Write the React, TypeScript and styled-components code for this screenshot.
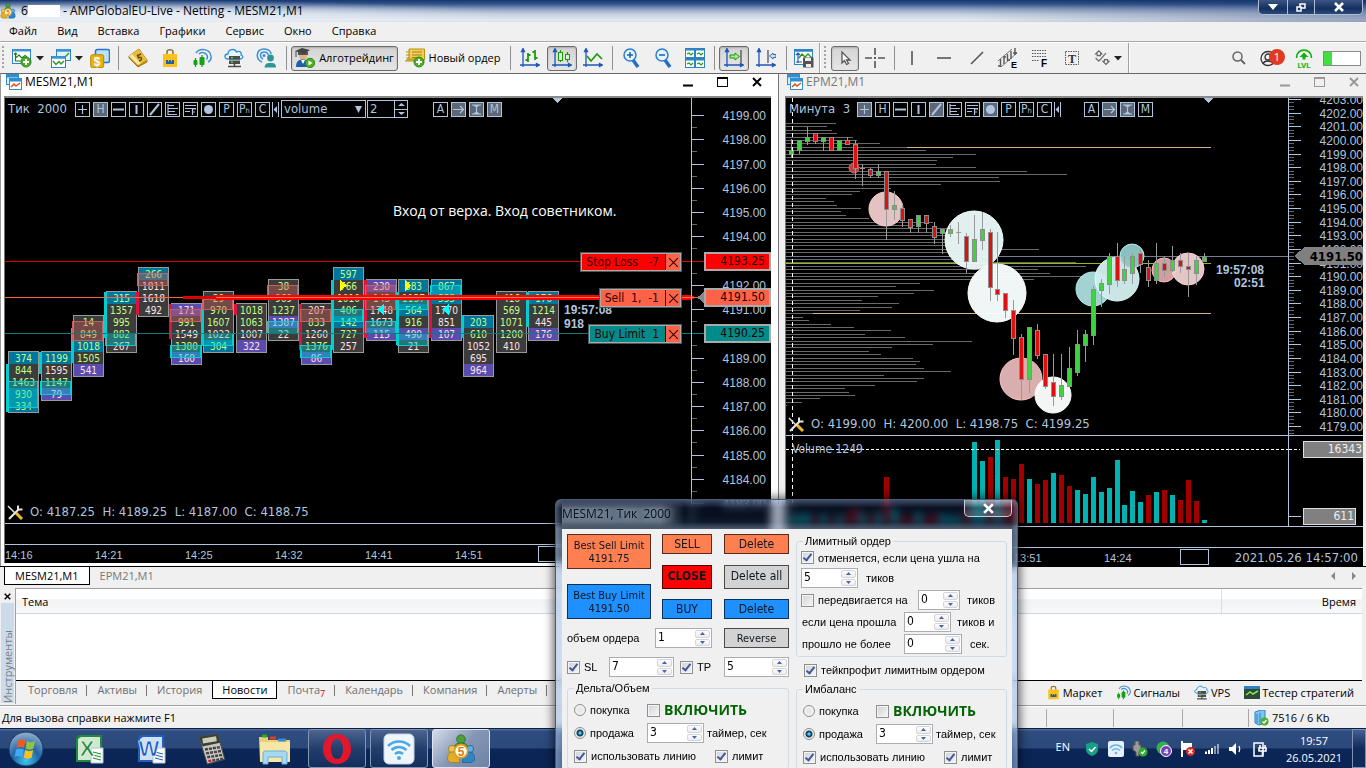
import React from 'react';
import styled, { createGlobalStyle, css } from 'styled-components';

const UI = '"Open Sans", "Noto Sans", sans-serif';
const TAHOMA = '"DejaVu Sans Condensed", "DejaVu Sans", sans-serif';
const SANS = '"Liberation Sans", Arial, sans-serif';
const STEEL = '#b0c4de';

const GlobalStyle = createGlobalStyle`
  *, *::before, *::after { box-sizing: border-box; }
  body { margin: 0; overflow: hidden; background: #f0f0f0; }
  button, input, select { font: inherit; color: inherit; margin: 0; padding: 0; }
  button { border: 0; background: none; }
  a { color: inherit; text-decoration: none; }
`;

const Desktop = styled.div`
  position: relative;
  display: flex;
  flex-direction: column;
  height: 100vh;
  min-height: 700px;
  overflow: hidden;
  font-family: ${UI};
  font-size: 11px;
  line-height: 16px;
  color: #000;
  background: #f0f0f0;
`;

/* ---------- title bar and menu ---------- */

const TitleBar = styled.header`
  flex: none;
  display: flex;
  align-items: flex-start;
  height: 22px;
  background:
    radial-gradient(ellipse 380px 14px at 130px 14px, rgba(240, 245, 252, 0.9), rgba(240, 245, 252, 0)),
    linear-gradient(to right, rgba(10, 40, 100, 0) 70%, rgba(10, 40, 100, 0.35)),
    linear-gradient(#17386f 0, #34558b 4px, #8c9fc0 9px, #c3cfdf 14px, #e4e9f0 20px, #d8dfe8);
`;

const AppTitle = styled.h1`
  flex: 1;
  display: flex;
  align-items: center;
  gap: 5px;
  height: 22px;
  margin: 0;
  font-size: 12px;
  font-weight: 400;
`;

const Redacted = styled.span`
  display: inline-block;
  width: 32px;
  height: 12px;
  margin: -2px 0 0;
  background: #fff;
  vertical-align: middle;
`;

const CaptionButtons = styled.div`
  display: flex;
  margin-right: 3px;
  border: 1px solid #aebbd0;
  border-top: 0;
  border-radius: 0 0 5px 5px;
  overflow: hidden;
`;

const CaptionButton = styled.button<{ $w: number }>`
  display: grid;
  place-items: center;
  width: ${(p) => p.$w}px;
  height: 14px;
  background: linear-gradient(#3c5582, #13305f 60%, #2b4a7b);
  & + & { border-left: 1px solid #aebbd0; }
`;

const MenuBar = styled.nav`
  flex: none;
  display: flex;
  gap: 20px;
  height: 20px;
  padding: 1px 9px 0;
  border-bottom: 1px solid #a8a8a8;
`;

/* ---------- toolbar ---------- */

const Toolbar = styled.div`
  flex: none;
  display: flex;
  align-items: center;
  height: 31px;
  border-top: 1px solid #fff;
  background: #f0f0f0;
`;

const ToolButton = styled.button<{ $w: number; $on?: boolean }>`
  flex: none;
  display: flex;
  align-items: center;
  justify-content: center;
  gap: 4px;
  width: ${(p) => p.$w}px;
  height: 25px;
  white-space: nowrap;
  ${(p) => p.$on && css`
    width: ${p.$w - 2}px;
    margin: 0 1px;
    border: 1px solid #6d6d6d;
    border-radius: 3px;
    background: linear-gradient(#d4d4d4, #e6e6e6);
    box-shadow: inset 0 1px 2px #aaa;
  `}
`;

const Separator = styled.i`
  flex: none;
  width: 1px;
  height: 24px;
  margin: 0 3px 0 4px;
  background: #8f8f8f;
`;

const Edge = styled.i`
  flex: none;
  width: 2px;
  height: 30px;
  margin: 0 1px;
  border-left: 1px solid #a0a0a0;
  background: #fff;
`;

const Grip = styled.i`
  flex: none;
  width: 2px;
  height: 24px;
  margin: 0 4px 0 2px;
  background: repeating-linear-gradient(#a5a5a5 0 2px, transparent 2px 4px);
`;

const ToolbarEnd = styled.div`
  display: flex;
  align-items: center;
  gap: 10px;
  margin-left: auto;
  padding-right: 5px;
`;

const SearchButton = styled.button`
  display: flex;
  margin-right: 4px;
`;

const AccountButton = styled.button`
  position: relative;
  display: flex;
  width: 25px;
`;

const Badge = styled.span`
  position: absolute;
  left: 9px;
  top: -1px;
  width: 16px;
  height: 16px;
  border-radius: 50%;
  background: #e03a20;
  color: #fff;
  line-height: 16px;
  text-align: center;
`;

const Connection = styled.div`
  width: 38px;
  height: 15px;
  border: 1px solid #8a8a8a;
  background: linear-gradient(to right, #3fe03f 8px, #fff 8px);
`;

/* ---------- chart windows ---------- */

const Workspace = styled.main`
  flex: 1;
  display: grid;
  grid-template-columns: minmax(0, 778fr) minmax(0, 588fr);
  min-height: 0;
  border-bottom: 1px solid #000;
`;

const ChartWindow = styled.section<{ $active?: boolean }>`
  display: flex;
  flex-direction: column;
  min-width: 0;
  min-height: 0;
  border-top: 1px solid #666;
  ${(p) => p.$active
    ? css`
      padding: 0 7px 3px 3px;
      border-left: 1px solid #999;
      background: #fff;
    `
    : css`
      padding: 0 3px 0 6px;
      border-left: 1px solid #777;
      background: #f0f0f0;
    `}
`;

const WindowTitle = styled.h2<{ $muted?: boolean }>`
  flex: none;
  display: flex;
  align-items: flex-start;
  gap: 2px;
  height: 22px;
  margin: 0;
  padding-left: 2px;
  font-size: 12px;
  font-weight: 400;
  color: ${(p) => (p.$muted ? '#777' : '#000')};
`;

const WindowControls = styled.span<{ $end: number }>`
  display: flex;
  gap: 24px;
  margin: 1px ${(p) => p.$end}px 0 auto;
`;

const ChartBox = styled.div<{ $rows: string; $axis: number }>`
  flex: 1;
  display: grid;
  grid-template: ${(p) => p.$rows} / minmax(0, 1fr) ${(p) => p.$axis}px;
  min-height: 0;
  border-top: 2px solid #8a8a8a;
  border-left: 1px solid #777;
  background: #000;
  color: ${STEEL};
  overflow: hidden;
`;

const Pane = styled.div`
  position: relative;
  min-width: 0;
  min-height: 0;
  overflow: hidden;
`;

const AxisPane = styled(Pane)`
  border-left: 1px solid ${STEEL};
`;

const VolumePane = styled(Pane)`
  border-top: 1px solid ${STEEL};
`;

const VolumeAxis = styled(AxisPane)`
  border-top: 1px solid ${STEEL};
`;

const PaneSvg = styled.svg`
  display: block;
  width: 100%;
  height: 100%;
  shape-rendering: crispEdges;
  font-family: ${TAHOMA};
`;

const Strip = styled.div`
  grid-column: 1 / -1;
  border-top: 1px solid ${STEEL};
`;

const TimeAxis = styled.div`
  position: relative;
  grid-column: 1 / -1;
  display: flex;
  border-top: 1px solid ${STEEL};
  font-family: ${SANS};
  font-size: 11px;
  line-height: 20px;
`;

const TimeOffset = styled.i`
  flex: none;
  width: 138px;
`;

const TimeMark = styled.span`
  flex: none;
  width: 90px;
`;

const TimeBox = styled.i<{ $left: number }>`
  position: absolute;
  left: ${(p) => p.$left}px;
  top: 1px;
  width: 29px;
  height: 16px;
  border: 1px solid ${STEEL};
  background: #000;
`;

const TimeNow = styled.time`
  margin-left: auto;
  padding-right: 5px;
  font-family: ${TAHOMA};
  font-size: 13px;
`;

const ChartTools = styled.div`
  position: absolute;
  left: 3px;
  top: 1px;
  display: flex;
  align-items: center;
  height: 20px;
  font-family: ${TAHOMA};
  font-size: 13px;
`;

const Period = styled.span<{ $w: number }>`
  width: ${(p) => p.$w}px;
  white-space: pre;
`;

const MiniButton = styled.button<{ $on?: boolean }>`
  display: grid;
  place-items: center;
  width: 15px;
  height: 15px;
  margin-right: 3px;
  border: 1px solid ${STEEL};
  background: ${(p) => (p.$on ? '#5c6878' : '#000')};
  font-size: 12px;
  line-height: 12px;
`;

const CollapseButton = styled.button`
  display: flex;
  width: 9px;
  margin-left: -1px;
`;

const DarkSelect = styled.span`
  display: flex;
  align-items: center;
  width: 85px;
  height: 18px;
  margin-right: 1px;
  padding: 0 3px 0 2px;
  border: 1px solid ${STEEL};
  select {
    flex: 1;
    min-width: 0;
    border: 0;
    outline: 0;
    appearance: none;
    background: #000;
  }
`;

const DarkNumber = styled.span`
  display: flex;
  width: 41px;
  height: 18px;
  border: 1px solid ${STEEL};
  input {
    width: 26px;
    padding-left: 2px;
    border: 0;
    outline: 0;
    background: #000;
  }
`;

const DarkArrows = styled.span`
  flex: 1;
  display: grid;
  border-left: 1px solid ${STEEL};
  button { display: grid; place-items: center; }
  button + button { border-top: 1px solid ${STEEL}; }
`;

const ModeTools = styled.div<{ $gap: number }>`
  display: flex;
  margin-left: ${(p) => p.$gap}px;
`;

const Ohlc = styled.div`
  position: absolute;
  left: 2px;
  bottom: 3px;
  display: flex;
  align-items: center;
  gap: 6px;
  font-family: ${TAHOMA};
  font-size: 13px;
  white-space: pre;
`;

const PaneLabel = styled.div`
  position: absolute;
  left: 6px;
  top: 5px;
  font-family: ${TAHOMA};
  font-size: 12px;
`;

const OrderTag = styled.div<{ $y: number; $color: string }>`
  position: absolute;
  right: 9px;
  top: ${(p) => p.$y - 10}px;
  display: flex;
  height: 20px;
  border: 2px solid #aaa;
  outline: 1px solid #555;
  outline-offset: -1px;
  background: ${(p) => p.$color};
  color: #300;
  font-family: ${TAHOMA};
  font-size: 12px;
  line-height: 16px;
  white-space: pre;
  span { padding: 0 6px 0 4px; }
  button {
    display: grid;
    place-items: center;
    width: 15px;
    border-left: 1px solid #200;
    background: #ff6347;
  }
`;

const PriceTag = styled.div<{ $y: number; $color: string }>`
  position: absolute;
  left: 12px;
  right: 0;
  top: ${(p) => p.$y - 9}px;
  height: 19px;
  padding-right: 4px;
  border: 2px solid #aaa;
  background: ${(p) => p.$color};
  color: #200;
  font-family: ${TAHOMA};
  font-size: 12px;
  line-height: 15px;
  text-align: right;
`;

const VolumeTag = styled.div<{ $y: number; $w: number }>`
  position: absolute;
  left: 14px;
  top: ${(p) => p.$y}px;
  width: ${(p) => p.$w}px;
  height: 17px;
  padding-right: 1px;
  border: 1px solid #ddd;
  background: #808080;
  color: #eee;
  font-family: ${TAHOMA};
  font-size: 12px;
  line-height: 15px;
  text-align: right;
`;

/* ---------- chart tabs, toolbox, status bar ---------- */

const ChartTabs = styled.div`
  flex: none;
  display: flex;
  align-items: flex-start;
  height: 20px;
  padding-left: 4px;
`;

const ChartTab = styled.button<{ $on?: boolean }>`
  height: 18px;
  padding: 0 10px;
  color: #777;
  ${(p) => p.$on && css`
    border: 1px solid #000;
    border-top: 0;
    background: #fff;
    color: #000;
  `}
`;

const TabScroll = styled.span`
  display: flex;
  gap: 12px;
  margin: 5px 6px 0 auto;
`;

const Toolbox = styled.section`
  flex: none;
  display: flex;
  height: 119px;
  padding: 1px 4px 1px 0;
  border-bottom: 1px solid #a0a0a0;
`;

const ToolboxSide = styled.div`
  display: flex;
  flex-direction: column;
  align-items: center;
  width: 15px;
`;

const SideTitle = styled.h2`
  flex: 1;
  width: 13px;
  margin: 2px 0 1px;
  background: #cbdbea;
  color: #7a7f86;
  font-size: 11px;
  font-weight: 400;
  line-height: 13px;
  writing-mode: vertical-rl;
  transform: rotate(180deg);
`;

const CloseSmall = styled.button`
  height: 13px;
`;

const ToolboxBody = styled.div`
  flex: 1;
  display: flex;
  flex-direction: column;
  min-width: 0;
  border-left: 1px solid #a0a0a0;
  border-top: 1px solid #a0a0a0;
`;

const NewsArea = styled.div`
  flex: 1;
  background: #fff;
  border-bottom: 1px solid #000;
`;

const NewsTable = styled.table`
  width: 100%;
  border-collapse: collapse;
  table-layout: fixed;
  th {
    height: 24px;
    padding: 3px 6px 0;
    border-bottom: 1px solid #d5d5d5;
    background: linear-gradient(#fff 40%, #f1f2f4 45%, #f7f8fa);
    font-weight: 400;
    text-align: left;
  }
  th:last-child {
    width: 141px;
    border-left: 1px solid #dedfe1;
    text-align: right;
  }
`;

const ToolboxTabs = styled.div`
  flex: none;
  display: flex;
  align-items: flex-start;
  height: 23px;
  padding-left: 2px;
`;

const ToolboxTab = styled.button<{ $on?: boolean; $bare?: boolean }>`
  height: 18px;
  padding: 0 10px;
  color: #6f6f6f;
  background: ${(p) => (p.$bare ? 'none' : 'linear-gradient(#777, #777) right 4px / 1px 11px no-repeat')};
  ${(p) => p.$on && css`
    padding: 0 9px;
    border: 1px solid #000;
    border-top: 0;
    background: #fff;
    color: #000;
  `}
`;

const MailCount = styled.sub`
  color: #e00000;
  font-size: 9px;
  line-height: 9px;
`;

const ServiceLinks = styled.div`
  display: flex;
  gap: 14px;
  margin: 4px 8px 0 auto;
  a { display: flex; gap: 2px; }
`;

const StatusBar = styled.footer`
  flex: none;
  display: flex;
  align-items: center;
  height: 22px;
  padding: 1px 0 0 2px;
  border-top: 1px solid #fff;
`;

const StatusText = styled.span`
  flex: 1;
`;

const StatusCell = styled.span<{ $w: number }>`
  display: flex;
  align-items: center;
  gap: 3px;
  width: ${(p) => p.$w}px;
  height: 18px;
  padding-left: 4px;
  border-left: 1px solid #a8a8a8;
`;

/* ---------- task bar ---------- */

const TaskBar = styled.div`
  flex: none;
  display: flex;
  align-items: center;
  height: 40px;
  border-top: 1px solid #0d1f40;
  background: linear-gradient(#5b78a4 0, #2f4d80 2px, #2b487a 19px, #0b2657 20px, #0a2454);
  color: #fff;
`;

const PinGroup = styled.div`
  display: flex;
  margin-left: 4px;
`;

const TaskButton = styled.button<{ $state?: 'open' | 'active' }>`
  display: grid;
  place-items: center;
  width: 58px;
  height: 39px;
  margin: 0 2px;
  border-radius: 3px;
  ${(p) => p.$state && css`
    border: 1px solid ${p.$state === 'active' ? '#dfe6f0' : '#8295b5'};
    background: ${p.$state === 'active'
      ? 'linear-gradient(135deg, #d5dce8, #8597b6 50%, #6d82a6)'
      : 'linear-gradient(#4c648e, #233e6c 50%, #142e5e)'};
  `}
`;

const StartButton = styled.button`
  display: grid;
  place-items: center;
  width: 54px;
  padding-right: 2px;
`;

const Tray = styled.div`
  display: flex;
  align-items: center;
  gap: 8px;
  margin-left: auto;
`;

const Language = styled.span`
  margin: -4px 6px 0 0;
`;

const Clock = styled.time`
  width: 76px;
  line-height: 17px;
  text-align: center;
`;

const ShowDesktop = styled.button`
  width: 14px;
  height: 39px;
  margin-left: -8px;
  border: 1px solid #7f92b4;
  background: linear-gradient(#44608f, #102a5a 50%);
`;

/* ---------- trading dialog ---------- */

const Dialog = styled.aside`
  position: absolute;
  left: 555px;
  top: 499px;
  bottom: 0;
  width: 463px;
  padding: 0 5px 0 6px;
  overflow: hidden;
  border: 1px solid #4b5a72;
  border-bottom: 0;
  border-radius: 6px 6px 0 0;
  background:
    linear-gradient(to right, rgba(180, 200, 230, 0.35), rgba(10, 30, 70, 0) 8px, rgba(10, 30, 70, 0) 455px, rgba(180, 200, 230, 0.3)),
    linear-gradient(rgba(120, 150, 200, 0.5), rgba(20, 45, 95, 0.35) 8px, rgba(15, 40, 85, 0.35) 22px, rgba(120, 145, 180, 0.6) 29px, rgba(150, 185, 230, 0.45) 50px);
  backdrop-filter: blur(4px);
  box-shadow: 0 0 10px 2px rgba(0, 0, 0, 0.6);
  font-family: ${SANS};
  font-size: 11px;
`;

const DialogTitle = styled.h2`
  display: flex;
  justify-content: space-between;
  height: 29px;
  margin: 0;
  color: #0a0f1c;
  font-family: ${UI};
  font-size: 12px;
  font-weight: 400;
  line-height: 28px;
  white-space: pre;
  span {
    padding: 0 14px 0 0;
    background: linear-gradient(to right, rgba(170, 185, 208, 0.55) 80%, rgba(170, 185, 208, 0));
    mask-image: linear-gradient(transparent, #000 30%, #000 75%, transparent);
    text-shadow: 0 0 6px #b4c0d4;
  }
`;

const DialogClose = styled.button`
  display: grid;
  place-items: center;
  width: 48px;
  height: 17px;
  border: 1px solid #c7cfdb;
  border-top: 0;
  border-radius: 0 0 5px 5px;
  background: linear-gradient(rgba(255, 255, 255, 0.45), rgba(255, 255, 255, 0.1) 50%, rgba(255, 255, 255, 0.2));
`;

const DialogBody = styled.div`
  display: flex;
  gap: 7px;
  height: 300px;
  padding: 5px 5px 0;
  background: #f0f0f0;
`;

const OrderColumn = styled.div`
  flex: none;
  width: 222px;
`;

const LimitColumn = styled.div`
  flex: 1;
  min-width: 0;
`;

const OrderPad = styled.div`
  display: flex;
  gap: 12px;
  height: 85px;
  font-family: ${TAHOMA};
`;

const PadColumn = styled.div<{ $w: number }>`
  display: flex;
  flex-direction: column;
  justify-content: space-between;
  width: ${(p) => p.$w}px;
  &:first-child { margin-right: -1px; }
`;

const OrderButton = styled.button<{ $color: string; $h: number; $bold?: boolean; $size?: number }>`
  width: 100%;
  height: ${(p) => p.$h}px;
  border: 1px solid rgba(0, 0, 0, 0.65);
  background: ${(p) => p.$color};
  color: #101820;
  font-family: ${TAHOMA};
  font-size: ${(p) => p.$size || 12}px;
  line-height: 13px;
  font-weight: ${(p) => (p.$bold ? 700 : 400)};
`;

const FormRow = styled.div`
  display: flex;
  align-items: center;
  height: 20px;
  margin-top: 9px;
`;

const ReverseCell = styled.div`
  width: 77px;
  padding-left: 12px;
`;

const GroupSpacer = styled.div`
  margin-top: 4px;
`;

const GroupBox = styled.fieldset<{ $gap: number; $top: number }>`
  min-width: 0;
  margin: 0;
  padding: ${(p) => p.$top}px 0 2px ${(p) => (p.$top ? 6 : 4)}px;
  border: 1px solid #d0dbe4;
  border-radius: 3px;
  legend {
    margin-left: ${(p) => (p.$top ? 0 : 2)}px;
    padding: 0 2px;
    line-height: 15px;
  }
  > div + div { margin-top: ${(p) => p.$gap}px; }
`;

const OptionRow = styled.div<{ $h?: number }>`
  display: flex;
  align-items: center;
  height: ${(p) => p.$h || 20}px;
  white-space: nowrap;
`;

const TakeProfitRow = styled(OptionRow)`
  margin: 3px 0 2px;
  padding-left: 8px;
`;

const Option = styled.label<{ $w?: number }>`
  display: flex;
  align-items: center;
  gap: 4px;
  width: ${(p) => (p.$w ? `${p.$w}px` : 'auto')};
  white-space: nowrap;
`;

const Caption = styled.label<{ $w?: number; $pad?: number }>`
  width: ${(p) => (p.$w ? `${p.$w}px` : 'auto')};
  padding-left: ${(p) => p.$pad || 0}px;
  white-space: nowrap;
`;

const FieldGap = styled.i`
  width: 6px;
`;

const Enable = styled.b`
  color: #006400;
  font-family: ${UI};
  font-size: 14px;
`;

const Check = styled.input.attrs({ type: 'checkbox' })`
  position: relative;
  flex: none;
  appearance: none;
  width: 13px;
  height: 13px;
  border: 1px solid #8e8f8f;
  background: linear-gradient(135deg, #cfd3d8, #f6f6f6);
  box-shadow: inset 0 0 0 1px #f4f4f4;
  &:checked::after {
    content: '';
    position: absolute;
    left: 3px;
    top: 0;
    width: 5px;
    height: 9px;
    border: solid #43579b;
    border-width: 0 2px 2px 0;
    transform: rotate(38deg);
  }
`;

const Radio = styled.input.attrs({ type: 'radio' })`
  flex: none;
  appearance: none;
  width: 12px;
  height: 12px;
  border: 1px solid #8e8f8f;
  border-radius: 50%;
  background: radial-gradient(#e2e4e6, #f8f8f8);
  &:checked { background: radial-gradient(circle at 50% 50%, #5fc4ec 0 1px, #155a86 2px, #12364f 3px, #eee 4px); }
`;

const NumberWrap = styled.span<{ $w: number }>`
  flex: none;
  display: flex;
  width: ${(p) => p.$w}px;
  height: 20px;
  padding: 1px;
  border: 1px solid #abadb3;
  background: #fff;
  input {
    flex: 1;
    min-width: 0;
    width: 0;
    padding: 0 0 2px 1px;
    border: 0;
    outline: 0;
    background: none;
    font-family: ${TAHOMA};
    font-size: 12px;
  }
`;

const Arrows = styled.span`
  display: grid;
  gap: 1px;
  width: 15px;
  button {
    display: grid;
    place-items: center;
    border: 1px solid #d3d5d9;
    border-radius: 2px;
    background: linear-gradient(#fdfdfd, #ececec);
  }
`;

/* ---------- small drawings ---------- */

const Triangle = ({ up, color = '#4a62a8', size = 5 }: { up?: boolean; color?: string; size?: number }) => (
  <svg width={size} height="3" viewBox="0 0 6 3" preserveAspectRatio="none" aria-hidden="true">
    <path d={up ? 'M0 3 L3 0 L6 3Z' : 'M0 0 L3 3 L6 0Z'} fill={color} />
  </svg>
);

const Caret = () => (
  <svg width="8" height="5" aria-hidden="true"><path d="M0 0H8L4 4.5Z" fill="#222" /></svg>
);

const Icon = ({ size = 20, children }: { size?: number; children: React.ReactNode }) => (
  <svg width={size} height={size} viewBox="0 0 20 20" fill="none" aria-hidden="true">{children}</svg>
);

const Plus = ({ x, y }: { x: number; y: number }) => (
  <g>
    <circle cx={x} cy={y} r="5" fill="#4caf2a" stroke="#2e8a14" />
    <path d={`M${x - 3} ${y}H${x + 3}M${x} ${y - 3}V${y + 3}`} stroke="#fff" strokeWidth="2" />
  </g>
);

const NewChartIcon = () => (
  <Icon>
    <rect x=".5" y="1.5" width="18" height="14" fill="#fff" stroke="#2d83c4" />
    <path d="M1 2.5H18" stroke="#3f96d8" strokeWidth="2" />
    <path d="M3.5 5V13H10M2 6.500L3.500 5L5 6.500M3.500 10L7 7L10 10L13 7.500L15 9" stroke="#1f7a1f" strokeWidth="1.2" />
    <Plus x={14} y={14} />
  </Icon>
);
const ProfilesIcon = () => (
  <Icon>
    <rect x="5.5" y="1.5" width="14" height="11" fill="#e4f1fb" stroke="#2d83c4" />
    <path d="M6 2.500H19" stroke="#3f96d8" strokeWidth="2.500" />
    <path d="M14 9L18 5" stroke="#2f9a2f" strokeWidth="1.5" />
    <rect x=".5" y="8.5" width="14" height="11" fill="#fff" stroke="#2d83c4" />
    <path d="M1 9.500H14" stroke="#3f96d8" strokeWidth="2.500" />
    <path d="M2 13L5 16.500L8 13.500L10 16L13 13" stroke="#2f9a2f" strokeWidth="1.5" />
  </Icon>
);
const MoneyWindowsIcon = () => (
  <Icon>
    <rect x="5.5" y="1.5" width="14" height="13" rx="2" fill="#bfe0fa" stroke="#1f78cf" strokeWidth="1.5" />
    <rect x=".7" y="6.7" width="13" height="13" rx="2" fill="#eab308" stroke="#b8860b" />
    <text x="7" y="17.5" fontFamily="Liberation Sans" fontWeight="700" fontSize="12" fill="#fff" textAnchor="middle">$</text>
  </Icon>
);
const GoldIcon = () => (
  <Icon>
    <path d="M1 8L11 1L19 12V14L10 19L1 10Z" fill="#c78f12" stroke="#94690a" strokeWidth=".8" />
    <path d="M1 8L11 1L19 12L10 17Z" fill="#e9bd3f" />
    <path d="M1 8L4 6L13 15.500L10 17Z" fill="#f8e8a8" />
    <path d="M13 6L9.500 7.500L10.500 10C12.500 8.500 14.500 10 13 12L11 13" stroke="#6d4a00" strokeWidth="1.5" />
  </Icon>
);
const BagIcon = ({ size = 20 }: { size?: number }) => (
  <Icon size={size}>
    <path d="M7 7V4C7 1 13 1 13 4V7" stroke="#8a7a3a" strokeWidth="1.6" />
    <path d="M3 6H17V19H3Z" fill="#fcc21b" />
    <path d="M6 16V12H8V13.5H9V12H11V13.5H12V12H14V16Z" fill="#1b5fae" />
  </Icon>
);
const SignalIcon = ({ size = 20 }: { size?: number }) => (
  <Icon size={size}>
    <path d="M4 5C8 -1 18 1 19 8C19.500 11 18 13 16 14M7 6C10 3 15 5 15.500 9C15.500 10 15 11 14.500 11.500" stroke="#3c8fd6" strokeWidth="1.5" />
    <path d="M3.500 10V19M10 7V19" stroke="#15a015" strokeWidth="1.200" />
    <rect x="1.500" y="12" width="4" height="5" rx="1" fill="#15a015" />
    <rect x="7.500" y="9" width="5" height="8" rx="1" fill="#15a015" />
  </Icon>
);
const CloudIcon = ({ size = 20 }: { size?: number }) => (
  <Icon size={size}>
    <path d="M4 11C0 11 0 6 4 6C4 1 11 0 12.5 4C16 2 18 5 17 7C20 8 19 11 16 11Z" fill="#e9f5fd" stroke="#2a90d0" strokeWidth="1.3" />
    <path d="M5 8H16V11.500H5ZM5 12.500H16V16H5Z" fill="#4c4c4c" />
    <path d="M7 9.700H9M7 14.200H9" stroke="#4ce04c" strokeWidth="1.3" />
    <path d="M10.500 16V18.500M4 18.500H17" stroke="#4c4c4c" strokeWidth="1.6" />
  </Icon>
);
const PersonIcon = () => (
  <Icon>
    <path d="M6 14C-1 11 0 1 8 1C13 1 15 4 15 6M7 11C3 9 4 4 8 4C10 4 12 5 12 7" stroke="#3c8fd6" strokeWidth="1.5" />
    <circle cx="8" cy="7.5" r="1.5" fill="#3c8fd6" />
    <circle cx="14.5" cy="10" r="3.4" fill="#2b9696" />
    <path d="M8.5 19.5C9 15 12 15 14.5 15C17 15 20 15 20 19.5Z" fill="#2b9696" />
  </Icon>
);
const AlgoIcon = () => (
  <Icon>
    <circle cx="8" cy="7.500" r="4" fill="#e0b183" />
    <path d="M3 4V7H13V4Z" fill="#555" /><path d="M0 3L7 0L15 2L9 6Z" fill="#444" /><path d="M1 3V9" stroke="#444" />
    <path d="M1 19C1 13 4 11.500 8 11.500C12 11.500 14 13 15 19Z" fill="#1f5fa8" /><path d="M6 12L8 16L10 12Z" fill="#fff" />
    <circle cx="15" cy="15" r="4.7" fill="#4caf2a" stroke="#2e8a14" /><path d="M13.5 12.5L17.5 15L13.5 17.5Z" fill="#fff" />
  </Icon>
);
const NewOrderIcon = () => (
  <Icon>
    <path d="M4 1H19.500V12H4Z" fill="#f1cf54" stroke="#b88f14" /><path d="M.5 13H11L13 11H3Z" fill="#e3b93a" stroke="#b88f14" /><path d="M1 4H5M1 7H5M1 10H5" stroke="#b88f14" />
    <path d="M7 4H17M7 7H17M7 9.500H13" stroke="#a8821a" strokeWidth="1.2" />
    <Plus x={14} y={14} />
  </Icon>
);
const Axes = () => (
  <path d="M3 1V19M0 17H19M3 .5L1.5 3.5H4.5ZM19.5 17L16.5 15.5V18.5Z" stroke="#1e56b8" strokeWidth="1.3" />
);
const BarsIcon = () => (
  <Icon><Axes /><path d="M8 5V14M5.5 12H8M8 7H10.5M15 2V12M12.5 4H15M15 10H17.5" stroke="#1f9a0f" strokeWidth="1.8" /></Icon>
);
const CandlesIcon = () => (
  <Icon>
    <Axes /><path d="M8.5 2V14M15.5 4V14" stroke="#1f9a0f" strokeWidth="1.2" />
    <rect x="6.5" y="4.5" width="4" height="8" fill="#d8f5d0" stroke="#1f9a0f" /><rect x="13.5" y="6.5" width="4" height="5" fill="#d8f5d0" stroke="#1f9a0f" />
  </Icon>
);
const LineIcon = () => <Icon><Axes /><path d="M4 8L8 13L14 6L19 11" stroke="#1f9a0f" strokeWidth="1.7" /></Icon>;
const ZoomIcon = ({ plus }: { plus?: boolean }) => (
  <Icon>
    <path d="M11 12L16 19" stroke="#2a6cc0" strokeWidth="3.5" />
    <circle cx="8" cy="7" r="6" fill="#e6f2fc" stroke="#2a7fd0" strokeWidth="1.5" />
    <path d={plus ? 'M5 7H11M8 4V10' : 'M5 7H11'} stroke="#1b5fae" strokeWidth="1.5" />
  </Icon>
);
const TilesIcon = () => (
  <Icon>
    {[0, 10].map((x) => [0, 10].map((y) => (
      <g key={`${x}-${y}`}>
        <rect x={x + 0.5} y={y + 0.5} width="9" height="9" fill="#fff" stroke="#2d83c4" />
        <path d={`M${x} ${y + 1.5}H${x + 10}`} stroke="#2d83c4" strokeWidth="2" />
        <path d={`M${x + 2} ${y + 6}L${x + 4} ${y + 5}L${x + 6} ${y + 7}L${x + 8} ${y + 5}`} stroke="#1f9a0f" strokeWidth="1.200" />
      </g>
    )))}
  </Icon>
);
const ScrollEndIcon = () => (
  <Icon><Axes /><path d="M17 2V15" stroke="#444" strokeWidth="1.2" /><path d="M6 7H11V5L15.5 8.5L11 12V10H6Z" fill="#a8e89a" stroke="#1f9a0f" /></Icon>
);
const ShiftIcon = () => (
  <Icon><Axes /><path d="M12 2V15" stroke="#444" strokeWidth="1.2" /><path d="M20 6.500H17V5L13.5 8L17 11V9.5H20Z" fill="#cfe0fa" stroke="#2a6cc0" /></Icon>
);
const TemplateIcon = () => (
  <Icon>
    <rect x=".5" y="1.5" width="18" height="15" fill="#fff" stroke="#2d83c4" /><path d="M1 2.500H18" stroke="#2d83c4" strokeWidth="2.500" />
    <path d="M4 5V15M2 7L4 5L6 7M2 14H8" stroke="#1e56b8" strokeWidth="1.200" /><path d="M5 10L8 6L11 9L14 6L18 10" stroke="#1f9a0f" strokeWidth="1.3" />
    <path d="M9 9.5H19.5V19.5H9Z" fill="#545454" /><path d="M11 10H17V13H11ZM12 16H17V19H12Z" fill="#eee" />
  </Icon>
);
const PointerIcon = () => <Icon><path d="M7 4V15L9.5 12.5L11.5 16.5L13.5 15.5L11.5 12H15Z" fill="#fff" stroke="#555" strokeWidth="1.3" /></Icon>;
const CrossIcon = () => <Icon><path d="M0 10H7M13 10H20M10 0V7M10 13V20" stroke="#555" strokeWidth="1.6" /><rect x="9" y="9" width="2" height="2" fill="#555" /></Icon>;
const StrokeIcon = ({ d }: { d: string }) => <Icon><path d={d} stroke="#555" strokeWidth="1.6" /></Icon>;
const ChannelIcon = () => (
  <Icon>
    <path d="M0 13L14 1M3 19L19 5" stroke="#777" /><path d="M2.500 11V19M6 8V16M9.500 6V13M13 3V11M17 0V7M0 18H3M6 9H8M9.500 12H12M15 5H19" stroke="#555" strokeWidth="1.4" />
    <text x="13" y="19.5" fontFamily="Liberation Sans" fontWeight="700" fontSize="9" fill="#000">E</text>
  </Icon>
);
const FiboIcon = () => (
  <Icon>
    <path d="M2 2.5H16M2 5.5H16M2 8.5H16M2 12.5H9" stroke="#555" strokeDasharray="1.5 1" />
    <text x="11" y="19" fontFamily="Liberation Sans" fontWeight="700" fontSize="10" fill="#000">F</text>
  </Icon>
);
const TextIcon = () => (
  <Icon>
    <rect x="3.5" y="3.5" width="13" height="13" stroke="#555" strokeDasharray="1.5 1" />
    <text x="10" y="14.5" fontFamily="Liberation Serif" fontWeight="700" fontSize="12" fill="#333" textAnchor="middle">T</text>
  </Icon>
);
const ShapesIcon = () => (
  <Icon size={16}>
    <path d="M2 5L6 1L10 5H8V7H4V5ZM2 10L6 14L15 4M13 13V14H11L15 18L19 14H17V12H13Z" stroke="#666" strokeWidth="1.4" />
  </Icon>
);
const SearchIcon = () => <svg width="14" height="14" fill="none" aria-hidden="true"><circle cx="5.5" cy="5.5" r="4.5" stroke="#666" strokeWidth="1.5" /><path d="M9 9L13 13" stroke="#666" strokeWidth="2" /></svg>;
const AccountIcon = () => (
  <svg width="17" height="17" fill="none" aria-hidden="true">
    <circle cx="8" cy="8.5" r="7" stroke="#333" strokeWidth="1.3" /><circle cx="8" cy="7" r="3" stroke="#333" strokeWidth="1.3" />
    <path d="M3 14C4 10 12 10 13 14" stroke="#333" strokeWidth="1.3" />
  </svg>
);
const LevelIcon = () => (
  <svg width="18" height="19" fill="none" aria-hidden="true">
    <path d="M1.500 9C1 -1.500 17 -1.500 16.500 9" stroke="#13b013" strokeWidth="1.7" />
    <path d="M9 3.500L13.500 8H10.500V10.500H7.500V8H4.500Z" fill="#13b013" />
    <text x="9" y="18.500" fontFamily="Roboto" fontSize="8" fontWeight="700" fill="#13b013" textAnchor="middle">LVL</text>
  </svg>
);
const ChartTitleIcon = () => (
  <svg width="17" height="16" fill="none" aria-hidden="true">
    <rect x=".5" y=".5" width="12" height="10" fill="#dceefa" stroke="#2d8fd0" /><path d="M0 2H13" stroke="#2d8fd0" strokeWidth="3" />
    <rect x="3.5" y="4.5" width="12" height="11" fill="#fff" stroke="#2d8fd0" /><path d="M3 6H16" stroke="#2d8fd0" strokeWidth="3" />
    <path d="M5 13L8 10L10 12L14 9" stroke="#e8501c" strokeWidth="1.5" />
  </svg>
);
const MtIcon = ({ size = 16 }: { size?: number }) => (
  <Icon size={size}>
    <circle cx="10" cy="3.500" r="2.900" fill="#4e9e3e" stroke="#2f6e24" strokeWidth=".6" /><path d="M5 12C5 7 7 6 10 6C13 6 15 7 15 12Z" fill="#4e9e3e" stroke="#2f6e24" strokeWidth=".6" />
    <circle cx="4" cy="10" r="2.400" fill="#e9c54e" stroke="#a8801a" strokeWidth=".6" /><path d="M1 17.500C1 13 2 12 5 12C8 12 9 14 9 19H3Z" fill="#dfae2a" stroke="#a8801a" strokeWidth=".6" />
    <circle cx="16" cy="10" r="2.400" fill="#5fb0e0" stroke="#1f6696" strokeWidth=".6" /><path d="M11 19C11 14 13 12 15 12C18 12 19 13 19 17.500L17 19Z" fill="#2f86c4" stroke="#1f6696" strokeWidth=".6" />
    <circle cx="10" cy="11.500" r="4.400" fill="#fff" stroke="#e69a1c" strokeWidth="1.2" />
    <text x="10" y="14.500" fontFamily="Liberation Sans" fontWeight="700" fontSize="8" fill="#e07a00" textAnchor="middle">5</text>
  </Icon>
);
const WrenchIcon = () => (
  <svg width="17" height="16" viewBox="0 0 17 16" fill="none" aria-hidden="true">
    <path d="M1 2L8 9" stroke="#ddd" strokeWidth="1.5" /><path d="M9 9L15 15" stroke="#f2b91e" strokeWidth="3" />
    <path d="M2 15L12 5" stroke="#e6e6e6" strokeWidth="2.2" /><path d="M11 1.5V5.5H15.5" stroke="#e6e6e6" strokeWidth="2" />
  </svg>
);
const CrossMark = ({ size = 11, color = '#000', w = 2 }: { size?: number; color?: string; w?: number }) => (
  <svg width={size} height={size} viewBox="0 0 10 10" aria-hidden="true"><path d="M1 1L9 9M9 1L1 9" stroke={color} strokeWidth={w} /></svg>
);

/* ---------- chart toolbars ---------- */

const TOOL_NAMES = ['plus', 'H', 'hline', 'vline', 'trend', 'rows', 'fibo', 'dot', 'P', 'Ph', 'C'];

const GLYPHS: Record<string, string> = {
  plus: 'M2 6.5H11M6.5 2V11',
  hline: 'M1 6.5H12',
  vline: 'M6.5 2V11',
  trend: 'M2 12L11 1',
  rows: 'M2 1V12M2 2.5H8M2 5.5H12M2 8.5H9M2 11.5H11',
  fibo: 'M1 2.5H12M1 5.5H12M1 8.5H6M8.5 12V6H12M8.5 9H11',
  arrow: 'M1 6.5H11M8 3L11.5 6.5L8 10',
  ibeam: 'M2 2H11M2 11H11M6.5 2V11M4 2L6.5 4L9 2M4 11L6.5 9L9 11',
};

const glyph = (name: string): React.ReactNode => {
  if (name === 'dot') return <svg width="13" height="13"><circle cx="6.5" cy="6.5" r="4.5" fill={STEEL} /></svg>;
  if (name === 'Ph') return <span>Pₕ</span>;
  if (GLYPHS[name]) {
    const bold = name === 'hline' || name === 'vline' || name === 'trend';
    return <svg width="13" height="13" fill="none"><path d={GLYPHS[name]} stroke={STEEL} strokeWidth={bold ? 2 : 1.2} /></svg>;
  }
  return <span>{name}</span>;
};

const MiniTools = ({ names, on }: { names: string[]; on: string[] }) => (
  <>
    {names.map((n) => (
      <MiniButton key={n} $on={on.includes(n)} aria-label={n}>{glyph(n)}</MiniButton>
    ))}
  </>
);

const Collapse = () => (
  <CollapseButton aria-label="Collapse">
    <svg width="7" height="15"><path d="M.5 0V15M6.5 0V15" stroke={STEEL} /><path d="M5 4V11L1.5 7.5Z" fill={STEEL} /></svg>
  </CollapseButton>
);

/* ---------- cluster chart (ticks) ---------- */

// Cells read "<background><text colour><volume>": T teal, D dark, P purple; g green, p pink.
type Cluster = { start: number; cells: string; bar?: [string, number, number]; zones?: [string, number, number][] };
const CYAN = '#00ced1';
const RED = '#dc143c';
const ROSE = '#cd5c5c';
const CLUSTERS: Cluster[] = [
  { start: 7, cells: 'Tg374 Dg844 Dg1463 Tg930 Tg334', bar: [CYAN, 266, 314], zones: [[CYAN, 283, 309]] },
  { start: 7, cells: 'Tg1199 Dp1595 Dg1147 Pp79', bar: [CYAN, 254, 276], zones: [[CYAN, 283, 296]] },
  { start: 4, cells: 'Dg14 Dg849 Tg1018 Dg1505 Pp541', bar: [CYAN, 230, 265], zones: [[ROSE, 223, 242]] },
  { start: 2, cells: 'Tg315 Dg1357 Dg995 Dg882 Dp267', bar: [CYAN, 194, 240], zones: [[CYAN, 235, 247]] },
  { start: 0, cells: 'Tg266 Dp1811 Dp1618 Dp492', bar: [RED, 194, 217], zones: [[ROSE, 175, 187]] },
  { start: 3, cells: 'Pp171 Dg991 Dp1549 Dg1380 Pp160', bar: [RED, 206, 241], zones: [[ROSE, 211, 223], [CYAN, 247, 259]] },
  { start: 2, cells: 'Dg29 Dg970 Dg1607 Dp1022 Tg304', bar: [CYAN, 206, 248], zones: [[ROSE, 201, 211], [CYAN, 235, 247]] },
  { start: 3, cells: 'Dg1018 Dg1063 Dp1007 Pp322', bar: [RED, 206, 217] },
  { start: 1, cells: 'Dg38 Dg969 Dg1237 Pp1387 Dp22', zones: [[ROSE, 187, 200], [CYAN, 223, 235]] },
  { start: 3, cells: 'Dp207 Dg833 Dp1260 Dg1376 Pp86', bar: [RED, 206, 252], zones: [[ROSE, 211, 223], [CYAN, 247, 259]] },
  { start: 0, cells: 'Tg597 Dg766 Dg1010 Dg406 Tg142 Dg727 Dp257', bar: [CYAN, 182, 252], zones: [[CYAN, 211, 223]] },
  { start: 1, cells: 'Pp230 Dg143 Dp1748 Dp1673 Pp115', bar: [RED, 182, 240], zones: [[ROSE, 187, 211], [CYAN, 223, 235]] },
  { start: 1, cells: 'Tg583 Dg1137 Tg564 Dg916 Pp490 Dp21', bar: [CYAN, 194, 247], zones: [[CYAN, 199, 211], [CYAN, 235, 247]] },
  { start: 1, cells: 'Tg867 Tg555 Dp1770 Dp851 Pp107', bar: [RED, 194, 240], zones: [[CYAN, 187, 199]] },
  { start: 4, cells: 'Tg203 Dg610 Dp1052 Dp695 Pp964', bar: [CYAN, 217, 240] },
  { start: 2, cells: 'Dg416 Dg569 Dg1071 Dg1200 Dp410' },
  { start: 2, cells: 'Tg176 Dg1214 Dp445 Pp176', bar: [CYAN, 194, 229] },
];
const CELL_BG: Record<string, string> = { T: '#00769c', D: '#3c3c3c', P: '#5a4caf' };
const CELL_FG: Record<string, string> = { g: '#c1ff86', p: '#ffe1e1' };

const ClusterColumn = ({ c, i }: { c: Cluster; i: number }) => {
  const cells = c.cells.split(' ');
  const x = 3 + Math.round(32.5 * i);
  const top = 169 + c.start * 12;
  return (
    <g>
      <rect x={x + 0.5} y={top + 0.5} width="30" height={cells.length * 12 + 1} fill="#3c3c3c" stroke="#999" />
      {cells.map((cell, r) => (
        <rect key={r} x={x + 1} y={top + 1 + r * 12} width="29" height="12" fill={CELL_BG[cell[0]]} />
      ))}
      {cells.map((cell, r) => (
        <text key={r} x={x + 15.5} y={top + 10.5 + r * 12} fontSize="10" textAnchor="middle" fill={CELL_FG[cell[1]]}>{cell.slice(2)}</text>
      ))}
      {c.bar && <rect x={x - 2} y={c.bar[1]} width="3" height={c.bar[2] - c.bar[1]} fill={c.bar[0]} />}
      {c.zones && c.zones.map(([color, y1, y2], z) => (
        <rect key={z} x={x - 0.5} y={y1 + 0.5} width="30" height={y2 - y1} fill={color} fillOpacity=".4" stroke={color} />
      ))}
    </g>
  );
};

const TickPlot = () => (
  <PaneSvg role="img" aria-label="MESM21 clusters">
    <path d="M547 0H557L552 5Z" fill={STEEL} />
    {CLUSTERS.map((c, i) => <ClusterColumn key={i} c={c} i={i} />)}
    <path d="M335 182V193L342 187.5ZM400 182V193L406 187.5Z" fill="#ff0" />
    <path d="M379 206V217L372 211.5ZM444 206V217L437 211.5Z" fill="#0ff" />
    <rect x="0" y="163" width="100%" height="1" fill="#e00000" />
    <rect x="0" y="199" width="100%" height="1" fill="#ff6347" />
    <rect x="178" y="198" width="100%" height="3" fill="#e00000" />
    <rect x="211" y="197" width="100%" height="5" fill="#f00" />
    <rect x="211" y="199" width="100%" height="1" fill="#ff7a5c" />
    <rect x="0" y="235" width="100%" height="1" fill="#0a7a7a" />
    <text x="559" y="216" fontSize="12" fontWeight="700" fontFamily="Liberation Sans" fill={STEEL}>19:57:08</text>
    <text x="559" y="230" fontSize="12" fontWeight="700" fontFamily="Liberation Sans" fill={STEEL}>918</text>
    <text x="388" y="118" fontSize="14" fontFamily="Open Sans" fill="#fff">Вход от верха. Вход советником.</text>
  </PaneSvg>
);

const PriceAxis = ({ from, count, y0, step, minors, right }: {
  from: number; count: number; y0: number; step: number; minors: number; right: number;
}) => (
  <>
    {Array.from({ length: count * minors }, (_, k) => {
      const y = Math.round(y0 + (k * step) / minors);
      return k % minors === 0
        ? <rect key={k} x="0" y={y} width="12" height="1" fill={STEEL} />
        : <rect key={k} x="0" y={y} width="5" height="1" fill="#666" />;
    })}
    {Array.from({ length: count }, (_, k) => (
      <text key={k} x={right} y={Math.round(y0 + k * step) + 5} fontFamily="Liberation Sans" fontSize="12" textAnchor="end" fill={STEEL}>
        {(from - k).toFixed(2)}
      </text>
    ))}
  </>
);

/* ---------- candle chart ---------- */

// high, low, body top, body bottom (pane pixels), up
const CANDLES: number[][] = [
  [41, 60, 52, 56, 1], [42, 56, 42, 52, 1], [29, 47, 39, 43, 1], [35, 46, 35, 43, 0], [39, 53, 39, 43, 1],
  [39, 52, 39, 52, 0], [42, 52, 42, 52, 1], [39, 46, 42, 46, 0], [42, 81, 46, 70, 0], [66, 88, 70, 70, 1],
  [70, 80, 71, 77, 0], [66, 80, 73, 77, 1], [73, 142, 73, 111, 0], [93, 122, 107, 111, 1], [107, 129, 110, 122, 0],
  [121, 135, 121, 129, 0], [117, 135, 117, 128, 1], [117, 135, 117, 125, 0], [124, 146, 128, 139, 0], [131, 156, 131, 135, 1],
  [127, 139, 131, 135, 1], [124, 146, 134, 134, 1], [135, 175, 138, 163, 0], [117, 163, 141, 163, 1], [114, 152, 131, 142, 1],
  [131, 203, 134, 189, 0], [134, 203, 191, 196, 0], [195, 220, 195, 212, 0], [202, 257, 212, 240, 0], [236, 302, 239, 281, 0],
  [229, 295, 229, 281, 1], [226, 261, 232, 257, 0], [256, 291, 256, 288, 0], [256, 308, 284, 298, 0], [256, 302, 287, 298, 1],
  [249, 288, 270, 288, 1], [232, 278, 246, 274, 1], [232, 264, 236, 247, 1], [188, 247, 191, 237, 1], [181, 209, 185, 192, 1],
  [155, 196, 158, 186, 1], [145, 189, 158, 182, 0], [158, 186, 171, 182, 1], [155, 186, 158, 175, 1], [151, 175, 155, 166, 0],
  [162, 189, 169, 182, 0], [145, 186, 165, 182, 1], [158, 179, 165, 172, 0], [148, 174, 162, 172, 1], [155, 175, 162, 168, 0],
  [155, 199, 168, 171, 0], [158, 187, 162, 175, 1], [155, 163, 158, 163, 1],
];
// Bar heights; a negative one is a falling bar.
const VOLUMES = [
  6, 8, 9, -7, 8, -6, 7, -9, -15, 9, -8, 9, -46, 14, -8, -7, 10, -7, -9, 8, 7, 6, -14, 81, 62, -66, 83, -46, -44, -59, 44, -39, -43, 50, -48,
  -37, 33, 29, 46, 31, 35, 63, 18, 32, 21, -28, 31, -33, 28, -23, -43, -22, 3,
];
const PROFILE = [
  50, 41, 46, 51, 67, 71, 94, 121, 140, 190, 167, 151, 150, 190, 241, 281, 213, 214, 155, 105, 74, 66, 40, 48, 51, 75, 55, 60, 83, 147,
  129, 164, 174, 179, 161, 181, 194, 253, 181, 284, 194, 290, 300, 252, 264, 300, 248, 134, 110, 148, 128, 92, 76, 113, 106, 74, 27, 17,
  23, 45, 68, 105, 79, 119, 186, 147, 106, 83, 95, 127, 134, 130, 138, 165, 98, 138, 131, 89, 59, 63, 69, 34, 16, 1,
];
const BUBBLES: [number, number, number, string, string][] = [
  [68, 70, 5, '#b04a4a', '#d66'], [100, 111, 17, '#ecc8c8', '#ffd0d0'], [188, 142, 29, '#e9f7f7', '#f2ffff'],
  [211, 195, 29, '#f8fefe', '#fff'], [235, 281, 21, '#e0b4b4', '#ffc4c4'], [267, 297, 18, '#fcfefe', '#fff'],
  [307, 191, 17, '#a9d8d8', '#afeeee'], [331, 181, 22, '#d2ebeb', '#d8ffff'], [346, 158, 12, '#8ec6c6', '#afeeee'],
  [378, 172, 12, '#d9a4a4', '#ffb8b8'], [402, 171, 16, '#eccccc', '#ffd0d0'],
];
const candleX = (i: number) => Math.round(5 + i * 7.94);

const MinutePlot = () => (
  <PaneSvg role="img" aria-label="EPM21 candles">
    <path d="M417 0H427L422 5Z" fill={STEEL} />
    {PROFILE.map((w, k) => <rect key={k} x="0" y={Math.round(25 + k * 3.4)} width={w} height="1" fill="#696969" />)}
    <rect x="121" y="49" width="304" height="1" fill="#d2b48c" />
    <rect x="27" y="215" width="398" height="1" fill="#d2b48c" />
    <rect x="0" y="158" width="100%" height="1" fill="#708090" />
    <rect x="0" y="165" width="425" height="1" fill="#8fbc1e" />
    {BUBBLES.map(([cx, cy, r, fill, stroke], k) => (
      <circle key={k} cx={cx} cy={cy} r={r} fill={fill} fillOpacity=".97" stroke={stroke} shapeRendering="auto" />
    ))}
    {CANDLES.map(([hi, lo, top, bottom, up], i) => {
      const x = candleX(i);
      return (
        <g key={i}>
          <rect x={x} y={hi} width="1" height={lo - hi} fill="#9a9a9a" />
          {bottom > top
            ? <rect x={x - 1.5} y={top + 0.5} width="4" height={bottom - top} fill={up ? '#3fd33f' : '#e01010'} stroke="#8d8d8d" />
            : <rect x={x - 2} y={top} width="5" height="1" fill="#9a9a9a" />}
        </g>
      );
    })}
    <path d="M6.5 0V340" stroke="#fff" strokeDasharray="4 3" />
    <text x="430" y="176" fontSize="12" fontWeight="700" fontFamily="Liberation Sans" fill={STEEL}>19:57:08</text>
    <text x="448" y="189" fontSize="12" fontWeight="700" fontFamily="Liberation Sans" fill={STEEL}>02:51</text>
  </PaneSvg>
);

/* ---------- form parts ---------- */

const NumberField = ({ id, value, w }: { id: string; value: string; w: number }) => (
  <NumberWrap $w={w}>
    <input id={id} defaultValue={value} aria-label={id} />
    <Arrows>
      <button aria-label="Больше"><Triangle up /></button>
      <button aria-label="Меньше"><Triangle /></button>
    </Arrows>
  </NumberWrap>
);

const SignalGroup = ({ name, title }: { name: string; title: string }) => (
  <GroupBox $gap={3} $top={4}>
    <legend>{title}</legend>
    <OptionRow>
      <Option $w={73}><Radio name={name} />покупка</Option>
      <Option><Check /><Enable>ВКЛЮЧИТЬ</Enable></Option>
    </OptionRow>
    <OptionRow>
      <Option $w={73}><Radio name={name} defaultChecked />продажа</Option>
      <NumberField id={`${name}-timer`} value="3" w={57} />
      <Caption htmlFor={`${name}-timer`} $pad={3}>таймер, сек</Caption>
    </OptionRow>
    <OptionRow>
      <Option $w={141}><Check defaultChecked />использовать линию</Option>
      <Option><Check defaultChecked />лимит</Option>
    </OptionRow>
  </GroupBox>
);

const CORAL = '#ff7f50';
const DODGER = '#1e90ff';
const GREY = '#d3d3d3';

const TradeDialog = () => (
  <Dialog>
    <DialogTitle>
      <span>MESM21, Тик  2000</span>
      <DialogClose aria-label="Закрыть"><CrossMark color="#fff" w={2.5} /></DialogClose>
    </DialogTitle>
    <DialogBody>
      <OrderColumn>
        <OrderPad>
          <PadColumn $w={84}>
            <OrderButton $color={CORAL} $h={35} $size={11}>Best Sell Limit<br />4191.75</OrderButton>
            <OrderButton $color={DODGER} $h={35} $size={11}>Best Buy Limit<br />4191.50</OrderButton>
          </PadColumn>
          <PadColumn $w={50}>
            <OrderButton $color={CORAL} $h={20}>SELL</OrderButton>
            <OrderButton $color="#ff0000" $h={24} $bold>CLOSE</OrderButton>
            <OrderButton $color={DODGER} $h={20}>BUY</OrderButton>
          </PadColumn>
          <PadColumn $w={65}>
            <OrderButton $color={CORAL} $h={20}>Delete</OrderButton>
            <OrderButton $color={GREY} $h={24}>Delete all</OrderButton>
            <OrderButton $color={DODGER} $h={20}>Delete</OrderButton>
          </PadColumn>
        </OrderPad>
        <FormRow>
          <Caption htmlFor="lots" $w={88}>объем ордера</Caption>
          <NumberField id="lots" value="1" w={57} />
          <ReverseCell><OrderButton $color={GREY} $h={20} $size={11}>Reverse</OrderButton></ReverseCell>
        </FormRow>
        <FormRow>
          <Option $w={42}><Check defaultChecked />SL</Option>
          <NumberField id="sl" value="7" w={65} />
          <FieldGap />
          <Option $w={44}><Check defaultChecked />TP</Option>
          <NumberField id="tp" value="5" w={65} />
        </FormRow>
        <GroupSpacer><SignalGroup name="delta" title="Дельта/Объем" /></GroupSpacer>
      </OrderColumn>
      <LimitColumn>
        <GroupBox $gap={2} $top={0}>
          <legend>Лимитный ордер</legend>
          <OptionRow $h={17}>
            <Option><Check defaultChecked />отменяется, если цена ушла на</Option>
          </OptionRow>
          <OptionRow>
            <NumberField id="cancel-ticks" value="5" w={57} />
            <Caption htmlFor="cancel-ticks" $pad={8}>тиков</Caption>
          </OptionRow>
          <OptionRow>
            <Option $w={117}><Check />передвигается на</Option>
            <NumberField id="move-ticks" value="0" w={42} />
            <Caption htmlFor="move-ticks" $pad={7}>тиков</Caption>
          </OptionRow>
          <OptionRow>
            <Caption htmlFor="price-ticks" $w={103} $pad={1}>если цена прошла</Caption>
            <NumberField id="price-ticks" value="0" w={47} />
            <Caption htmlFor="price-ticks" $pad={6}>тиков и</Caption>
          </OptionRow>
          <OptionRow>
            <Caption htmlFor="seconds" $w={103} $pad={1}>прошло не более</Caption>
            <NumberField id="seconds" value="0" w={58} />
            <Caption htmlFor="seconds" $pad={8}>сек.</Caption>
          </OptionRow>
        </GroupBox>
        <TakeProfitRow>
          <Option><Check defaultChecked />тейкпрофит лимитным ордером</Option>
        </TakeProfitRow>
        <SignalGroup name="imbalance" title="Имбаланс" />
      </LimitColumn>
    </DialogBody>
  </Dialog>
);

/* ---------- page sections ---------- */

const MainToolbar = () => (
  <Toolbar>
    <Grip />
    <ToolButton $w={39} aria-label="Новый график"><NewChartIcon /><Caret /></ToolButton>
    <ToolButton $w={39} aria-label="Профили"><ProfilesIcon /><Caret /></ToolButton>
    <ToolButton $w={28} aria-label="Обзор рынка"><MoneyWindowsIcon /></ToolButton>
    <Separator />
    <ToolButton $w={32} aria-label="Символы"><GoldIcon /></ToolButton>
    <ToolButton $w={32} aria-label="Маркет"><BagIcon /></ToolButton>
    <ToolButton $w={32} aria-label="Сигналы"><SignalIcon /></ToolButton>
    <ToolButton $w={32} aria-label="VPS"><CloudIcon /></ToolButton>
    <ToolButton $w={32} aria-label="Сообщество"><PersonIcon /></ToolButton>
    <Separator />
    <ToolButton $w={109} $on><AlgoIcon />Алготрейдинг</ToolButton>
    <ToolButton $w={107}><NewOrderIcon />Новый ордер</ToolButton>
    <Separator />
    <ToolButton $w={32} aria-label="Бары"><BarsIcon /></ToolButton>
    <ToolButton $w={32} $on aria-label="Свечи"><CandlesIcon /></ToolButton>
    <ToolButton $w={30} aria-label="Линия"><LineIcon /></ToolButton>
    <Separator />
    <ToolButton $w={32} aria-label="Увеличить"><ZoomIcon plus /></ToolButton>
    <ToolButton $w={32} aria-label="Уменьшить"><ZoomIcon /></ToolButton>
    <ToolButton $w={30} aria-label="Упорядочить"><TilesIcon /></ToolButton>
    <Separator />
    <ToolButton $w={32} $on aria-label="Автопрокрутка"><ScrollEndIcon /></ToolButton>
    <ToolButton $w={32} aria-label="Сдвиг"><ShiftIcon /></ToolButton>
    <Separator />
    <ToolButton $w={28} aria-label="Шаблоны"><TemplateIcon /></ToolButton>
    <Edge /><Grip />
    <ToolButton $w={30} $on aria-label="Курсор"><PointerIcon /></ToolButton>
    <ToolButton $w={30} aria-label="Перекрестие"><CrossIcon /></ToolButton>
    <Separator />
    <ToolButton $w={28} aria-label="Вертикальная линия"><StrokeIcon d="M10 3V17" /></ToolButton>
    <ToolButton $w={36} aria-label="Горизонтальная линия"><StrokeIcon d="M3 10H17" /></ToolButton>
    <ToolButton $w={30} aria-label="Трендовая линия"><StrokeIcon d="M4 16L16 4" /></ToolButton>
    <ToolButton $w={32} aria-label="Канал"><ChannelIcon /></ToolButton>
    <ToolButton $w={32} aria-label="Фибоначчи"><FiboIcon /></ToolButton>
    <ToolButton $w={32} aria-label="Текст"><TextIcon /></ToolButton>
    <ToolButton $w={39} aria-label="Фигуры"><ShapesIcon /><Caret /></ToolButton>
    <Edge />
    <ToolbarEnd>
      <SearchButton aria-label="Поиск"><SearchIcon /></SearchButton>
      <AccountButton aria-label="Аккаунт"><AccountIcon /><Badge>1</Badge></AccountButton>
      <LevelIcon />
      <Connection />
    </ToolbarEnd>
  </Toolbar>
);

const Controls = ({ color, end }: { color: string; end: number }) => (
  <WindowControls $end={end}>
    <svg width="10" height="13" aria-hidden="true"><path d="M0 10.5H10" stroke={color} strokeWidth="2" /></svg>
    <svg width="11" height="13" fill="none" aria-hidden="true"><rect x=".5" y="2.5" width="10" height="9" stroke={color} /><path d="M0 3H11" stroke={color} strokeWidth="2" /></svg>
    <svg width="10" height="13" aria-hidden="true"><path d="M1 3L9 11M9 3L1 11" stroke={color} strokeWidth="2" /></svg>
  </WindowControls>
);

const TickWindow = () => (
  <ChartWindow $active>
    <WindowTitle><ChartTitleIcon />MESM21,M1<Controls color="#000" end={9} /></WindowTitle>
    <ChartBox $rows="minmax(0, 1fr) 21px 19px" $axis={80}>
      <Pane>
        <TickPlot />
        <ChartTools>
          <Period $w={67}>Тик  2000</Period>
          <MiniTools names={TOOL_NAMES} on={['H']} />
          <Collapse />
          <DarkSelect>
            <select aria-label="Индикатор" defaultValue="volume"><option>volume</option></select>
            <svg width="7" height="7" aria-hidden="true"><path d="M0 0H7L3.5 7Z" fill={STEEL} /></svg>
          </DarkSelect>
          <DarkNumber>
            <input aria-label="Значение" defaultValue="2" />
            <DarkArrows>
              <button aria-label="Больше"><Triangle up color={STEEL} size={7} /></button>
              <button aria-label="Меньше"><Triangle color={STEEL} size={7} /></button>
            </DarkArrows>
          </DarkNumber>
          <ModeTools $gap={25}><MiniTools names={['A', 'arrow', 'ibeam', 'M']} on={['arrow', 'ibeam', 'M']} /></ModeTools>
        </ChartTools>
        <OrderTag $y={164} $color="#ff0000"><span>Stop Loss   -7</span><button aria-label="Удалить"><CrossMark color="#300" w={1} /></button></OrderTag>
        <OrderTag $y={200} $color="#ff6347"><span>Sell  1,  -1</span><button aria-label="Удалить"><CrossMark color="#300" w={1} /></button></OrderTag>
        <OrderTag $y={236} $color="#008b8b"><span>Buy Limit  1</span><button aria-label="Удалить"><CrossMark color="#300" w={1} /></button></OrderTag>
        <Ohlc><WrenchIcon />O: 4187.25  H: 4189.25  L: 4187.00  C: 4188.75</Ohlc>
      </Pane>
      <AxisPane>
        <PaneSvg aria-hidden="true">
          <PriceAxis from={4199} count={17} y0={17} step={24.25} minors={2} right={74} />
          <rect x="0" y="163" width="14" height="1" fill="#e00000" />
          <rect x="0" y="198" width="2" height="3" fill="#f00" />
          <rect x="0" y="199" width="14" height="1" fill="#ff6347" />
          <rect x="0" y="235" width="14" height="1" fill="#008b8b" />
          <path d="M5 199.5L12 194V205Z" fill="#888" />
        </PaneSvg>
        <PriceTag $y={163} $color="#ff0000">4193.25</PriceTag>
        <PriceTag $y={199} $color="#ff6347">4191.50</PriceTag>
        <PriceTag $y={235} $color="#008b8b">4190.25</PriceTag>
      </AxisPane>
      <Strip />
      <TimeAxis>
        {['14:16', '14:21', '14:25', '14:32', '14:41', '14:51'].map((t) => <TimeMark key={t}>{t}</TimeMark>)}
        <TimeBox $left={533} />
      </TimeAxis>
    </ChartBox>
  </ChartWindow>
);

const MinuteWindow = () => (
  <ChartWindow>
    <WindowTitle $muted><ChartTitleIcon />EPM21,M1<Controls color="#999" end={4} /></WindowTitle>
    <ChartBox $rows="minmax(0, 1fr) 91px 21px 19px" $axis={75}>
      <Pane>
        <MinutePlot />
        <ChartTools>
          <Period $w={68}>Минута  3</Period>
          <MiniTools names={TOOL_NAMES} on={['plus', 'trend', 'dot']} />
          <Collapse />
          <ModeTools $gap={21}><MiniTools names={['A', 'arrow', 'ibeam', 'M']} on={['arrow', 'ibeam']} /></ModeTools>
        </ChartTools>
        <Ohlc><WrenchIcon />O: 4199.00  H: 4200.00  L: 4198.75  C: 4199.25</Ohlc>
      </Pane>
      <AxisPane>
        <PaneSvg aria-hidden="true">
          <PriceAxis from={4203} count={25} y0={1} step={13.63} minors={4} right={74} />
          <path d="M5 158L16 149H75V167H16Z" fill="#808080" />
          <text x="74" y="163" fontSize="13" fontWeight="700" textAnchor="end" fill="#000">4191.50</text>
        </PaneSvg>
      </AxisPane>
      <VolumePane>
        <PaneSvg role="img" aria-label="Объем">
          {VOLUMES.map((v, i) => (
            <rect key={i} x={candleX(i) - 2} y={87 - Math.abs(v)} width="5" height={Math.abs(v)} fill={v < 0 ? '#a00000' : '#00b2b2'} />
          ))}
          <path d="M6.5 0V87" stroke="#fff" strokeDasharray="4 3" />
          <line x1="0" x2="100%" y1="13.5" y2="13.5" stroke="#fff" strokeDasharray="3 2" />
        </PaneSvg>
        <PaneLabel>Volume 1249</PaneLabel>
      </VolumePane>
      <VolumeAxis>
        <PaneSvg aria-hidden="true">
          <path d="M0 13.5H11" stroke="#fff" strokeDasharray="3 2" />
          <rect x="0" y="80" width="12" height="1" fill={STEEL} />
        </PaneSvg>
        <VolumeTag $y={5} $w={61}>16343</VolumeTag>
        <VolumeTag $y={72} $w={53}>611</VolumeTag>
      </VolumeAxis>
      <Strip />
      <TimeAxis>
        <TimeOffset />
        {['13:18', '13:51', '14:24'].map((t) => <TimeMark key={t}>{t}</TimeMark>)}
        <TimeBox $left={394} />
        <TimeNow>2021.05.26 14:57:00</TimeNow>
      </TimeAxis>
    </ChartBox>
  </ChartWindow>
);

const ToolboxPanel = () => (
  <Toolbox>
    <ToolboxSide>
      <CloseSmall aria-label="Закрыть"><CrossMark size={7} /></CloseSmall>
      <SideTitle>Инструменты</SideTitle>
    </ToolboxSide>
    <ToolboxBody>
      <NewsArea>
        <NewsTable><thead><tr><th>Тема</th><th>Время</th></tr></thead></NewsTable>
      </NewsArea>
      <ToolboxTabs>
        <ToolboxTab>Торговля</ToolboxTab>
        <ToolboxTab>Активы</ToolboxTab>
        <ToolboxTab $bare>История</ToolboxTab>
        <ToolboxTab $on>Новости</ToolboxTab>
        <ToolboxTab>Почта<MailCount>7</MailCount></ToolboxTab>
        <ToolboxTab>Календарь</ToolboxTab>
        <ToolboxTab>Компания</ToolboxTab>
        <ToolboxTab>Алерты</ToolboxTab>
        <ServiceLinks>
          <a href="#market"><BagIcon size={15} />Маркет</a>
          <a href="#signals"><SignalIcon size={15} />Сигналы</a>
          <a href="#vps"><CloudIcon size={15} />VPS</a>
          <a href="#tester">
            <svg width="16" height="15" aria-hidden="true"><rect y="1" width="16" height="13" fill="#2c4a3c" /><rect y="1" width="16" height="3" fill="#2d83c4" /><path d="M2 10L6 7L9 9L14 6" stroke="#8ee04a" strokeWidth="1.5" fill="none" /></svg>
            Тестер стратегий
          </a>
        </ServiceLinks>
      </ToolboxTabs>
    </ToolboxBody>
  </Toolbox>
);

const Status = () => (
  <StatusBar>
    <StatusText>Для вызова справки нажмите F1</StatusText>
    <StatusCell $w={67} /><StatusCell $w={69} /><StatusCell $w={66} />
    <StatusCell $w={118}>
      <svg width="16" height="16" aria-hidden="true">
        <path d="M2 2L8 0H12V13L6 15L2 13Z" fill="#7cc4f0" stroke="#2d83c4" /><path d="M4 4V13M7 3V14" stroke="#2d83c4" />
        <circle cx="11.5" cy="11.5" r="4" fill="#4caf2a" /><path d="M9.5 11.5L11 13L13.5 10" stroke="#fff" strokeWidth="1.3" fill="none" />
      </svg>
      7516 / 6 Kb
    </StatusCell>
  </StatusBar>
);

const Orb = () => (
  <svg width="36" height="36" viewBox="0 0 36 36" aria-hidden="true">
    <defs>
      <radialGradient id="orb" cx=".5" cy=".85" r=".8"><stop offset="0" stopColor="#3fc4ee" /><stop offset=".5" stopColor="#1f66a6" /><stop offset="1" stopColor="#8aa9c8" /></radialGradient>
    </defs>
    <circle cx="18" cy="18" r="17" fill="url(#orb)" stroke="#153a66" />
    <path d="M10 10C13 8 15 8 17.5 9.5L16 17C13.5 15.5 11 15.5 8.5 17Z" fill="#ee5a24" />
    <path d="M19 10C21.5 11.5 24 11.5 27 10L25.5 17.5C23 19 20 19 17.5 17.5Z" fill="#8cc63f" />
    <path d="M8 18.5C10.5 17 13 17 15.7 18.5L14.2 26C11.5 24.5 9 24.5 6.5 26Z" fill="#3fa9f5" />
    <path d="M17.2 19C20 20.5 22.5 20.5 25.2 19L23.7 26.5C21 28 18.5 28 15.7 26.5Z" fill="#fcc21b" />
  </svg>
);
const OfficeIcon = ({ letter, color, pale }: { letter: string; color: string; pale: string }) => (
  <svg width="30" height="30" aria-hidden="true">
    <path d="M5 1H28V28H2V4Z" fill={color} /><path d="M4 5L7 3H26V26H4Z" fill={pale} />
    <path d="M17 14H29V29H17Z" fill="#f7fbf8" stroke="#b9c4cc" /><path d="M19 18L27 20M19 21L27 23M19 24L27 26" stroke={color} />
    <text x="13" y="22" fontFamily="Liberation Sans" fontWeight="700" fontSize="22" fill={color} stroke="#fff" strokeWidth=".6" textAnchor="middle">{letter}</text>
  </svg>
);
const CalcIcon = () => (
  <svg width="30" height="32" aria-hidden="true">
    <g transform="rotate(-9 15 16)">
      <path d="M3 2H22L25 28L7 30Z" fill="#c8c8c4" stroke="#4a4a4a" /><path d="M3 2H22L23 11L5 12Z" fill="#3c3c38" />
      <rect x="6" y="4" width="14" height="5" fill="#c9cfb4" />
      {[0, 1, 2, 3].map((c) => [0, 1, 2, 3].map((r) => (
        <rect key={`${c}${r}`} x={7 + c * 4 + r * 0.5} y={14 + r * 4} width="3" height="2.5" fill={c === 0 && r === 3 ? '#c22' : '#444'} />
      )))}
    </g>
  </svg>
);
const FolderIcon = () => (
  <svg width="34" height="32" aria-hidden="true">
    <path d="M1 4H10V7H32V29H2Z" fill="#eccf74" /><path d="M4 3H9" stroke="#2da52d" strokeWidth="3" /><path d="M12 5H18" stroke="#d8402a" strokeWidth="3" /><path d="M20 7H28" stroke="#3a8bd0" strokeWidth="3" />
    <path d="M2 9H32V29H2Z" fill="#f7e6a4" /><path d="M5 31V20C5 18 7 18 8 18H26C28 18 29 19 29 20V31H24V24H10V31Z" fill="#a6d8f2" stroke="#6bb0d8" />
  </svg>
);
const OperaIcon = () => (
  <svg width="30" height="32" aria-hidden="true">
    <path fillRule="evenodd" d="M15 1C24 1 29 8 29 16C29 24 24 31 15 31C6 31 1 24 1 16C1 8 6 1 15 1ZM15 6C11 6 9 11 9 16C9 21 11 26 15 26C19 26 21 21 21 16C21 11 19 6 15 6Z" fill="#e3172b" />
  </svg>
);
const WifiIcon = () => (
  <svg width="32" height="32" viewBox="0 0 32 32" fill="none" aria-hidden="true">
    <rect x="1" y="1" width="30" height="30" rx="5" fill="#eef5fb" stroke="#c3d4e4" />
    <path d="M5 13C11 7 21 7 27 13M8.5 17C13 13 19 13 23.5 17M12 21C14.5 19 17.5 19 20 21" stroke="#4aa8e8" strokeWidth="2.5" /><circle cx="16" cy="25" r="2" fill="#4aa8e8" />
  </svg>
);

const trayIcons: React.ReactNode[] = [
  <g key="shield"><path d="M8 1L14 3V8C14 12 11 14 8 15C5 14 2 12 2 8V3Z" fill="#16a085" /><path d="M5 8L7.5 10.5L11.5 6" stroke="#fff" strokeWidth="1.5" /></g>,
  <g key="wifi"><rect x="0" y="0" width="16" height="16" rx="2" fill="#e4f0fa" /><path d="M2 7C5 3 11 3 14 7M4 9.5C7 7 9 7 12 9.5" stroke="#6ab4ea" strokeWidth="1.5" /><circle cx="8" cy="12" r="1.3" fill="#6ab4ea" /></g>,
  <g key="usb"><path d="M3 0H7V4H9V9L7 11V15H4V11L1 9V4H3Z" fill="#9a9a9a" stroke="#555" /><circle cx="11" cy="11" r="4.5" fill="#2faa2f" /><path d="M9 11L10.5 12.5L13 9.5" stroke="#fff" strokeWidth="1.3" /></g>,
  <g key="agent"><circle cx="7" cy="7" r="6.5" fill="#34b050" /><circle cx="10" cy="10" r="5.5" fill="#7b3fb5" stroke="#fff" /><text x="10" y="13" fontFamily="Liberation Sans" fontWeight="700" fontSize="8" fill="#fff" textAnchor="middle">4</text></g>,
  <g key="flag"><path d="M2 0V16" stroke="#fff" strokeWidth="2" /><path d="M3 2H12V9H3Z" fill="#fff" /><circle cx="10.5" cy="10.5" r="4.5" fill="#d8281c" /><path d="M8.5 8.5L12.5 12.5M12.5 8.5L8.5 12.5" stroke="#fff" strokeWidth="1.5" /></g>,
  <g key="net" stroke="#fff"><path d="M2 13V10.5M5 13V9M8 13V7" strokeWidth="2" /><path d="M11 13V5M14 13V3" strokeWidth="2" strokeOpacity=".5" /></g>,
  <g key="sound"><path d="M1 6H4L8 2V14L4 10H1Z" fill="#fff" /><path d="M11 5C12 7 12 9 11 11" stroke="#fff" strokeWidth="1.3" /></g>,
  <g key="power"><rect x="2" y="2" width="9" height="13" stroke="#fff" strokeWidth="1.5" /><path d="M8 4V7M13 4V7M7 7H14V10H7ZM10.5 10V14" stroke="#fff" strokeWidth="1.6" /></g>,
];

const Taskbar = () => (
  <TaskBar>
    <StartButton aria-label="Пуск"><Orb /></StartButton>
    <PinGroup>
      <TaskButton aria-label="Excel"><OfficeIcon letter="X" color="#1f8a3b" pale="#cfe8cf" /></TaskButton>
      <TaskButton aria-label="Word"><OfficeIcon letter="W" color="#1f5fc4" pale="#cfe0f5" /></TaskButton>
      <TaskButton aria-label="Калькулятор"><CalcIcon /></TaskButton>
      <TaskButton aria-label="Проводник"><FolderIcon /></TaskButton>
      <TaskButton $state="open" aria-label="Opera"><OperaIcon /></TaskButton>
      <TaskButton $state="open" aria-label="Wi-Fi"><WifiIcon /></TaskButton>
      <TaskButton $state="active" aria-label="MetaTrader"><MtIcon size={30} /></TaskButton>
    </PinGroup>
    <Tray>
      <Language>EN</Language>
      {trayIcons.map((icon, i) => <svg key={i} width="16" height="16" fill="none" aria-hidden="true">{icon}</svg>)}
      <Clock>19:57<br />26.05.2021</Clock>
      <ShowDesktop aria-label="Рабочий стол" />
    </Tray>
  </TaskBar>
);

export default function App() {
  return (
    <Desktop>
      <GlobalStyle />
      <TitleBar>
        <AppTitle><MtIcon /><span>6<Redacted /> - AMPGlobalEU-Live - Netting - MESM21,M1</span></AppTitle>
        <CaptionButtons>
          <CaptionButton $w={28} aria-label="Свернуть"><svg width="10" height="6"><path d="M0 0H10L5 6Z" fill="#fff" /></svg></CaptionButton>
          <CaptionButton $w={27} aria-label="Развернуть"><svg width="10" height="9" fill="none"><rect x="4" y="1" width="5" height="4" stroke="#fff" strokeWidth="1.5" /><rect x="1" y="4" width="4" height="4" fill="#1a3766" stroke="#fff" strokeWidth="1.5" /></svg></CaptionButton>
          <CaptionButton $w={48} aria-label="Закрыть"><CrossMark size={10} color="#fff" w={2.5} /></CaptionButton>
        </CaptionButtons>
      </TitleBar>
      <MenuBar>
        {['Файл', 'Вид', 'Вставка', 'Графики', 'Сервис', 'Окно', 'Справка'].map((m) => <a key={m} href={`#${m}`}>{m}</a>)}
      </MenuBar>
      <MainToolbar />
      <Workspace>
        <TickWindow />
        <MinuteWindow />
      </Workspace>
      <ChartTabs>
        <ChartTab $on>MESM21,M1</ChartTab>
        <ChartTab>EPM21,M1</ChartTab>
        <TabScroll>
          <svg width="5" height="8" aria-hidden="true"><path d="M4 0V8L0 4Z" fill="#888" /></svg>
          <svg width="12" height="8" aria-hidden="true"><path d="M4 0V8L8 4Z" fill="#888" /></svg>
        </TabScroll>
      </ChartTabs>
      <ToolboxPanel />
      <Status />
      <Taskbar />
      <TradeDialog />
    </Desktop>
  );
}
